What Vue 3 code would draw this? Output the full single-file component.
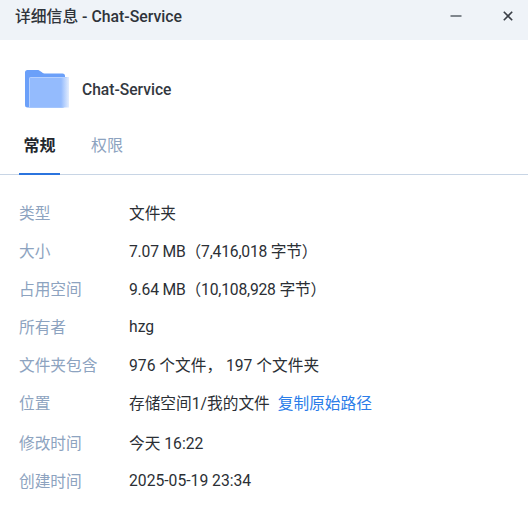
<script setup>
const rows = [
  { label: '类型', value: '文件夹' },
  { label: '大小', value: '7.07 MB（7,416,018 字节）', tight: true },
  { label: '占用空间', value: '9.64 MB（10,108,928 字节）', tight: true },
  { label: '所有者', value: 'hzg' },
  { label: '文件夹包含', value: '976 个文件， 197 个文件夹' },
  { label: '位置', value: '存储空间1/我的文件', link: '复制原始路径' },
  { label: '修改时间', value: '今天 16:22' },
  { label: '创建时间', value: '2025-05-19 23:34' }
]
</script>

<template>
  <div class="window">
    <div class="titlebar">
      <span class="title">详细信息 - Chat-Service</span>
      <div class="controls">
        <svg class="ctrl" width="12" height="12" viewBox="0 0 12 12">
          <path d="M0.5 6h11" stroke="#50565f" stroke-width="1.4" />
        </svg>
        <svg class="ctrl" width="12" height="12" viewBox="0 0 12 12">
          <path d="M1.8 1.8l8.4 8.4M10.2 1.8l-8.4 8.4" stroke="#3a3f47" stroke-width="1.6" />
        </svg>
      </div>
    </div>

    <div class="head">
      <svg class="folder" width="44" height="40" viewBox="0 0 44 40">
        <defs>
          <linearGradient id="front" x1="0" y1="0" x2="1" y2="0">
            <stop offset="0.8" stop-color="#94bbfd" />
            <stop offset="1" stop-color="#e3edfe" />
          </linearGradient>
        </defs>
        <path d="M0 3.5a2.5 2.5 0 0 1 2.5-2.5h10c2.500 0 4 2.800 7 3.500h18a2.500 2.500 0 0 1 2.500 2.500v29.500a2 2 0 0 1-2 2h-35.500a2.500 2.500 0 0 1-2.500-2.500z" fill="#6ba0f9" />
        <path d="M4 9.500a1.500 1.500 0 0 1 1.500-1.500h38.500v30.500h-38.500a1.500 1.500 0 0 1-1.500-1.500z" fill="url(#front)" />
        <path d="M4.500 38v-28.500a1 1 0 0 1 1-1h36" fill="none" stroke="#b5d0fe" stroke-width="1" />
      </svg>
      <span class="name">Chat-Service</span>
    </div>

    <div class="tabs">
      <div class="tab active">常规</div>
      <div class="tab">权限</div>
    </div>

    <div class="rows">
      <div class="row" :class="{ 'has-link': row.link }" v-for="row in rows" :key="row.label">
        <span class="label">{{ row.label }}</span>
        <span class="value" :class="{ tight: row.tight }">{{ row.value }}</span>
        <a class="link" v-if="row.link">{{ row.link }}</a>
      </div>
    </div>
  </div>
</template>

<style>
html, body {
  margin: 0;
  background: #fff;
}
</style>

<style scoped>
.window {
  width: 528px;
  height: 509px;
  overflow: hidden;
  background: #fff;
  font-family: Roboto, "Noto Sans CJK SC", sans-serif;
}

.titlebar {
  height: 40px;
  background: #eff3f8;
  display: flex;
  justify-content: space-between;
  padding: 0 14px 9px 15px;
  box-sizing: border-box;
  align-items: center;
}

.title {
  font-size: 15.800px;
  font-weight: 500;
  color: #2f343b;
}

.controls {
  display: flex;
  gap: 40px;
}

.head {
  display: flex;
  align-items: center;
  padding: 29px 0 0 25px;
  height: 40px;
}

.name {
  margin: 2px 0 0 13px;
  font-size: 15.600px;
  font-weight: 500;
  color: #33383f;
}

.tabs {
  display: flex;
  margin-top: 22px;
  padding-left: 19px;
  gap: 31px;
  border-bottom: 1px solid #c8d5e5;
}

.tab {
  width: 41px;
  height: 44px;
  box-sizing: border-box;
  font-size: 16px;
  line-height: 30px;
  color: #8da3c0;
  margin-bottom: -1px;
}

.tab.active {
  text-align: center;
  color: #23272d;
  font-weight: 700;
  border-bottom: 2px solid #2b74de;
}

.rows {
  display: flex;
  flex-direction: column;
  padding: 18px 0 0 19px;
}

.row {
  display: flex;
  align-items: center;
  height: 38px;
  font-size: 15.700px;
}

.row.has-link {
  margin-bottom: 2px;
}

.label {
  width: 110px;
  color: #8da3c0;
}

.value {
  color: #2b2f35;
}

.value.tight {
  letter-spacing: -0.200px;
}

.link {
  margin-left: 8px;
  color: #2b7de9;
}
</style>
